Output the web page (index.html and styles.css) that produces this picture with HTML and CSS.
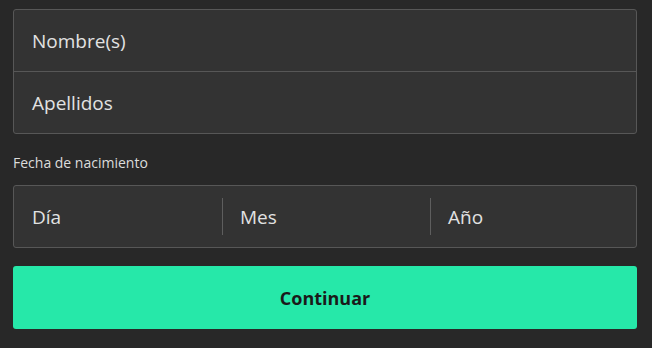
FILE: index.html
```html
<!DOCTYPE html>
<html lang="es">
<head>
<meta charset="utf-8">
<link rel="stylesheet" href="styles.css">
</head>
<body>
<form class="form">
  <div class="group">
    <div class="field">Nombre(s)</div>
    <div class="field field-sep">Apellidos</div>
  </div>
  <div class="label">Fecha de nacimiento</div>
  <div class="group date">
    <div class="cell cell-first">Día</div>
    <div class="vsep"></div>
    <div class="cell">Mes</div>
    <div class="vsep"></div>
    <div class="cell">Año</div>
  </div>
  <button type="button" class="btn">Continuar</button>
</form>
</body>
</html>
```
FILE: styles.css
```css
html, body {
  margin: 0;
  padding: 0;
  background: #282828;
}
body {
  font-family: "Open Sans", "Noto Sans", sans-serif;
  width: 652px;
  height: 348px;
  overflow: hidden;
}
.form {
  padding: 9px 15px 0 13px;
  display: flex;
  flex-direction: column;
}
.group {
  border: 1px solid #575757;
  border-radius: 3px;
  background: #333333;
}
.field {
  height: 61px;
  display: flex;
  align-items: center;
  padding-left: 18px;
  font-size: 19px;
  color: #e2e2e2;
}
.field-sep {
  border-top: 1px solid #575757;
}
.label {
  margin-top: 19px;
  line-height: 20px;
  height: 20px;
  font-size: 14px;
  color: #dcdcdc;
  margin-bottom: 12px;
}
.date {
  display: grid;
  grid-template-columns: 208px 1px 207px 1px 1fr;
  align-items: center;
  height: 61px;
}
.cell {
  padding-left: 17px;
  font-size: 19px;
  color: #e2e2e2;
}
.cell-first {
  padding-left: 18px;
}
.vsep {
  width: 1px;
  height: 37px;
  background: #5e5e5e;
}
.btn {
  margin-top: 18px;
  height: 63px;
  border: none;
  border-radius: 3px;
  background: #26e8a9;
  color: #1a1a1a;
  font-family: "Open Sans", "Noto Sans", sans-serif;
  font-weight: 700;
  font-size: 18px;
  padding: 0;
}
```
